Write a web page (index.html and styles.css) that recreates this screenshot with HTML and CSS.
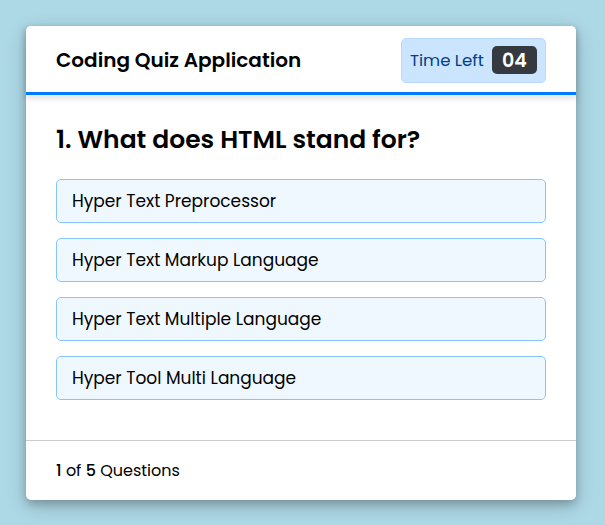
FILE: index.html
```html
<!DOCTYPE html>
<html>
<head>
<meta charset="utf-8">
<link rel="stylesheet" href="styles.css">
</head>
<body>
<div class="quiz">
  <header class="quiz-header">
    <h1 class="title">Coding Quiz Application</h1>
    <div class="timer">
      <span class="timer-label">Time Left</span>
      <span class="timer-value">04</span>
    </div>
  </header>
  <section class="quiz-body">
    <h2 class="question">1. What does HTML stand for?</h2>
    <ul class="options">
      <li class="option">Hyper Text Preprocessor</li>
      <li class="option">Hyper Text Markup Language</li>
      <li class="option">Hyper Text Multiple Language</li>
      <li class="option">Hyper Tool Multi Language</li>
    </ul>
  </section>
  <footer class="quiz-footer">
    <p class="count"><b>1</b> of <b>5</b> Questions</p>
  </footer>
</div>
</body>
</html>
```
FILE: styles.css
```css
* { box-sizing: border-box; }
html, body { margin: 0; padding: 0; }
body {
  background: #add8e6;
  font-family: Poppins, "Open Sans", sans-serif;
  color: #000;
  height: 525px;
  display: flex;
  align-items: center;
  justify-content: center;
}
.quiz {
  width: 550px;
  background: #fff;
  border-radius: 5px;
  box-shadow: 0 4px 8px 0 rgba(0,0,0,0.2), 0 6px 20px 0 rgba(0,0,0,0.19);
  margin-left: -3px;
}
.quiz-header {
  height: 69px;
  padding: 3px 30px 0 30px;
  display: flex;
  align-items: center;
  justify-content: space-between;
  border-bottom: 3px solid #007bff;
  box-shadow: 0 3px 5px 1px rgba(0,0,0,0.1);
  position: relative;
}
.title {
  margin: 0;
  font-size: 20px;
  font-weight: 600;
}
.timer {
  display: flex;
  align-items: center;
  justify-content: space-between;
  width: 145px;
  height: 45px;
  padding: 0 8px 0 8px;
  background: #cce5ff;
  border: 1px solid #b8daff;
  border-radius: 5px;
  color: #004085;
  white-space: nowrap;
}
.timer-label { font-size: 16.6px; }
.timer-value {
  background: #343a40;
  color: #fff;
  font-size: 19px;
  font-weight: 600;
  width: 45px;
  height: 28px;
  border-radius: 5px;
  display: flex;
  align-items: center;
  justify-content: center;
}
.quiz-body {
  padding: 25px 30px 40px;
}
.question {
  margin: 0 0 19px;
  font-size: 25px;
  font-weight: 600;
  line-height: 40px;
}
.options {
  list-style: none;
  margin: 0;
  padding: 0;
  display: flex;
  flex-direction: column;
  gap: 15px;
}
.option {
  height: 44px;
  display: flex;
  align-items: center;
  padding: 0 15px;
  background: aliceblue;
  border: 1px solid #84c5fe;
  border-radius: 5px;
  font-size: 17px;
}
.quiz-footer {
  border-top: 1px solid #ccc;
  height: 60px;
  padding: 0 30px;
  display: flex;
  align-items: center;
}
.count {
  margin: 0;
  font-size: 16px;
}
.count b { font-weight: 500; }
```
